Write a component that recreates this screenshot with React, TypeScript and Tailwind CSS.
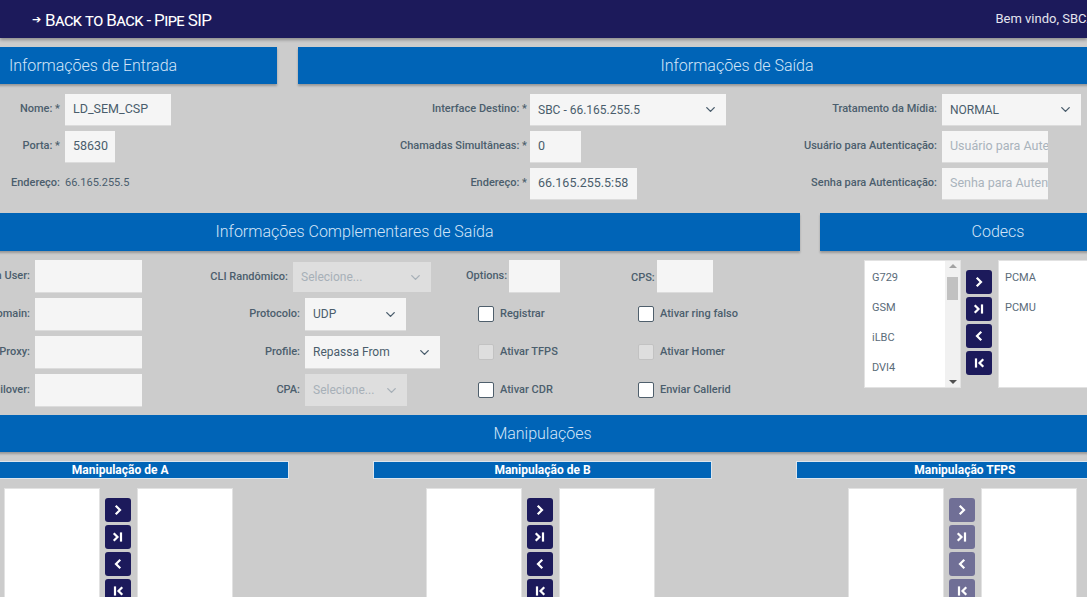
import { ChevronDown } from 'lucide-react';

const lbl = 'text-[11px] font-medium text-[#4b5e6d] whitespace-nowrap';
const inputBox = 'h-full bg-[#f5f5f5] shadow-[0_1px_0_#dcdcdc] flex items-center px-[8px] text-[12.5px] text-[#4a5d6c] whitespace-nowrap overflow-hidden';
const sectionHead =
  'bg-[#0064b7] text-[#d3e4f7] text-[16px] font-light flex items-center justify-center shadow-[0_2px_2px_rgba(0,0,0,0.25)]';

function Select({ value, width, disabled }: { value: string; width: string; disabled?: boolean }) {
  return (
    <div
      className={`${width} h-full flex items-center justify-between px-[8px] text-[12px] whitespace-nowrap ${
        disabled ? 'bg-[#dedede] text-[#a7b0b8]' : 'bg-[#f5f5f5] text-[#4a5d6c] shadow-[0_1px_0_#dcdcdc]'
      }`}
    >
      <span>{value}</span>
      <ChevronDown size={15} strokeWidth={2.2} className={disabled ? 'text-[#a7b0b8]' : 'text-[#4a5d6c]'} />
    </div>
  );
}

function Check({ text, disabled }: { text: string; disabled?: boolean }) {
  return (
    <div className="flex items-center gap-[6px]">
      <span
        className={`w-[16px] h-[16px] rounded-[2px] border ${
          disabled ? 'bg-[#dedede] border-[#c2c2c2]' : 'bg-white border-[#4f5f6c]'
        }`}
      />
      <span className={lbl}>{text}</span>
    </div>
  );
}

type Kind = 'next' | 'last' | 'prev' | 'first';

function MoveBtn({ kind, muted }: { kind: Kind; muted?: boolean }) {
  return (
    <div
      className={`w-[26px] h-[24px] rounded-[3px] flex items-center justify-center ${
        muted ? 'bg-[#706f96]' : 'bg-[#1c1a5b]'
      }`}
    >
      <svg width="12" height="12" viewBox="0 0 12 12" fill="none" stroke="white" strokeWidth="2.2" strokeLinecap="square">
        {kind === 'next' && <path d="M4.5 2.5 L8 6 L4.5 9.5" />}
        {kind === 'last' && (
          <>
            <path d="M2.5 3 L5.5 6 L2.5 9" />
            <path d="M9 2.5 V9.5" />
          </>
        )}
        {kind === 'prev' && <path d="M7.5 2.5 L4 6 L7.5 9.5" />}
        {kind === 'first' && (
          <>
            <path d="M3 2.5 V9.5" />
            <path d="M9.5 3 L6.5 6 L9.5 9" />
          </>
        )}
      </svg>
    </div>
  );
}

function Buttons({ muted }: { muted?: boolean }) {
  return (
    <div className="flex flex-col gap-[3px] pt-[10px]">
      <MoveBtn kind="next" muted={muted} />
      <MoveBtn kind="last" muted={muted} />
      <MoveBtn kind="prev" muted={muted} />
      <MoveBtn kind="first" muted={muted} />
    </div>
  );
}

function Manip({ title, muted }: { title: string; muted?: boolean }) {
  return (
    <div>
      <div className="mx-[42px] h-[18px] bg-[#0064b7] border border-[#dde6ee] text-white text-[12px] font-bold flex items-center justify-center">
        {title}
      </div>
      <div className="mt-[9px] flex justify-center gap-[5px] pr-[4px]">
        <div className="w-[96px] h-[128px] bg-white border border-[#e2e2e2]" />
        <Buttons muted={muted} />
        <div className="ml-[1px] w-[96px] h-[128px] bg-white border border-[#e2e2e2]" />
      </div>
    </div>
  );
}

export default function App() {
  return (
    <div className="w-[1087px] h-[597px] overflow-hidden bg-[#cccccc] font-['Roboto',sans-serif]">
      {/* top bar */}
      <header className="h-[38px] bg-[#1c1a5b] flex items-center justify-between pl-[32px] shadow-[0_2px_3px_rgba(0,0,0,0.3)] relative z-10">
        <div className="flex items-center gap-[4px] text-white pt-[3px]">
          <span className="text-[11px]">➔</span>
          <span className="text-[17px] [font-variant-caps:small-caps] tracking-[-0.6px]">Back to Back - Pipe SIP</span>
        </div>
        <span className="text-[13px] text-[#e4e4ee] whitespace-nowrap mr-[-8px]">Bem vindo, SBCA</span>
      </header>

      <div className="ml-[-91px] w-[1267px]">
        {/* row 1 */}
        <div className="flex gap-[21px] mt-[9px] items-start">
          <div className="w-[368px]">
            <div className={`${sectionHead} h-[37px]`}>Informações de Entrada</div>
            <div className="mt-[10px] flex flex-col gap-[6px]">
              <div className="h-[31px] flex items-center gap-[5px]">
                <span className={`${lbl} w-[151px] text-right`}>Nome: *</span>
                <div className={`${inputBox} w-[106px]`}>LD_SEM_CSP</div>
              </div>
              <div className="h-[31px] flex items-center gap-[5px]">
                <span className={`${lbl} w-[151px] text-right`}>Porta: *</span>
                <div className={`${inputBox} w-[50px]`}>58630</div>
              </div>
              <div className="h-[31px] flex items-center gap-[5px]">
                <span className={`${lbl} w-[151px] text-right`}>Endereço:</span>
                <span className="text-[11px] text-[#4a5d6c]">66.165.255.5</span>
              </div>
            </div>
          </div>

          <div className="w-[878px]">
            <div className={`${sectionHead} h-[37px]`}>Informações de Saída</div>
            <div className="mt-[10px] flex">
              <div className="w-[439px] flex flex-col gap-[6px]">
                <div className="h-[31px] flex items-center gap-[3px]">
                  <span className={`${lbl} w-[229px] text-right`}>Interface Destino: *</span>
                  <Select value="SBC - 66.165.255.5" width="w-[196px]" />
                </div>
                <div className="h-[31px] flex items-center gap-[3px]">
                  <span className={`${lbl} w-[229px] text-right`}>Chamadas Simultâneas: *</span>
                  <div className={`${inputBox} w-[51px]`}>0</div>
                </div>
                <div className="h-[31px] flex items-center gap-[3px]">
                  <span className={`${lbl} w-[229px] text-right`}>Endereço: *</span>
                  <div className={`${inputBox} w-[107px]`}>66.165.255.5:58</div>
                </div>
              </div>
              <div className="flex flex-col gap-[6px]">
                <div className="h-[31px] flex items-center gap-[5px]">
                  <span className={`${lbl} w-[200px] text-right`}>Tratamento da Mídia:</span>
                  <Select value="NORMAL" width="w-[139px]" />
                </div>
                <div className="h-[31px] flex items-center gap-[5px]">
                  <span className={`${lbl} w-[200px] text-right`}>Usuário para Autenticação:</span>
                  <div className={`${inputBox} w-[106px] text-[#a9b3bc]`}>Usuário para Autenticação</div>
                </div>
                <div className="h-[31px] flex items-center gap-[5px]">
                  <span className={`${lbl} w-[200px] text-right`}>Senha para Autenticação:</span>
                  <div className={`${inputBox} w-[106px] text-[#a9b3bc]`}>Senha para Autenticação</div>
                </div>
              </div>
            </div>
          </div>
        </div>

        {/* row 2 */}
        <div className="flex gap-[20px] mt-[14px] items-start">
          <div className="w-[891px]">
            <div className={`${sectionHead} h-[38px]`}>Informações Complementares de Saída</div>
            <div className="mt-[9px] flex">
              <div className="w-[241px] flex flex-col gap-[6px]">
                {['Authentication User:', 'Domain:', 'Outbound Proxy:', 'Failover:'].map((t) => (
                  <div key={t} className="h-[32px] flex items-center justify-end gap-[5px] pr-[8px]">
                    <span className={lbl}>{t}</span>
                    <div className={`${inputBox} w-[107px]`} />
                  </div>
                ))}
              </div>
              <div className="w-[300px] flex flex-col gap-[6px]">
                <div className="h-[32px] flex items-center justify-end gap-[5px] pr-[19px] pt-[2px]">
                  <span className={lbl}>CLI Randômico:</span>
                  <Select value="Selecione..." width="w-[138px]" disabled />
                </div>
                <div className="h-[32px] flex items-center gap-[5px]">
                  <span className={`${lbl} w-[150px] text-right`}>Protocolo:</span>
                  <Select value="UDP" width="w-[101px]" />
                </div>
                <div className="h-[32px] flex items-center gap-[5px]">
                  <span className={`${lbl} w-[150px] text-right`}>Profile:</span>
                  <Select value="Repassa From" width="w-[135px]" />
                </div>
                <div className="h-[32px] flex items-center gap-[5px]">
                  <span className={`${lbl} w-[150px] text-right`}>CPA:</span>
                  <Select value="Selecione..." width="w-[102px]" disabled />
                </div>
              </div>
              <div className="w-[150px] flex flex-col gap-[6px]">
                <div className="h-[32px] flex items-center gap-[2px] pl-[16px]">
                  <span className={lbl}>Options:</span>
                  <div className={`${inputBox} w-[51px]`} />
                </div>
                <div className="h-[32px] flex items-center pl-[28px]">
                  <Check text="Registrar" />
                </div>
                <div className="h-[32px] flex items-center pl-[28px]">
                  <Check text="Ativar TFPS" disabled />
                </div>
                <div className="h-[32px] flex items-center pl-[28px]">
                  <Check text="Ativar CDR" />
                </div>
              </div>
              <div className="flex flex-col gap-[6px]">
                <div className="h-[32px] flex items-center gap-[2px] pl-[31px]">
                  <span className={`${lbl} pt-[4px]`}>CPS:</span>
                  <div className={`${inputBox} w-[56px]`} />
                </div>
                <div className="h-[32px] flex items-center pl-[38px]">
                  <Check text="Ativar ring falso" />
                </div>
                <div className="h-[32px] flex items-center pl-[38px]">
                  <Check text="Ativar Homer" disabled />
                </div>
                <div className="h-[32px] flex items-center pl-[38px]">
                  <Check text="Enviar Callerid" />
                </div>
              </div>
            </div>
          </div>

          <div className="w-[356px]">
            <div className={`${sectionHead} h-[38px]`}>Codecs</div>
            <div className="mt-[9px] flex gap-[5px] pl-[44px]">
              <div className="w-[97px] h-[128px] bg-white border border-[#e2e2e2] flex">
                <div className="flex-1 flex flex-col pl-[7px] pt-[9px] gap-[17px] text-[11px] text-[#5a6b79]">
                  <span className="h-[13px]">G729</span>
                  <span className="h-[13px]">GSM</span>
                  <span className="h-[13px]">iLBC</span>
                  <span className="h-[13px]">DVI4</span>
                </div>
                <div className="w-[15px] bg-[#f1f1f1] flex flex-col items-center justify-between py-[3px]">
                  <span className="w-0 h-0 border-x-[4px] border-x-transparent border-b-[4px] border-b-[#a3a3a3]" />
                  <div className="flex-1 w-full px-[2px] pt-[9px] pb-[80px]">
                    <div className="w-full h-full bg-[#c1c1c1]" />
                  </div>
                  <span className="w-0 h-0 border-x-[4px] border-x-transparent border-t-[4px] border-t-[#505050]" />
                </div>
              </div>
              <Buttons />
              <div className="ml-[1px] w-[96px] h-[128px] bg-white border border-[#e2e2e2] flex flex-col pl-[6px] pt-[9px] gap-[17px] text-[11px] text-[#5a6b79]">
                <span className="h-[13px]">PCMA</span>
                <span className="h-[13px]">PCMU</span>
              </div>
            </div>
          </div>
        </div>

        {/* row 3 */}
        <div className={`${sectionHead} h-[37px] mt-[9px]`}>Manipulações</div>
        <div className="grid grid-cols-3 mt-[9px]">
          <Manip title="Manipulação de A" />
          <Manip title="Manipulação de B" />
          <Manip title="Manipulação TFPS" muted />
        </div>
      </div>
    </div>
  );
}
